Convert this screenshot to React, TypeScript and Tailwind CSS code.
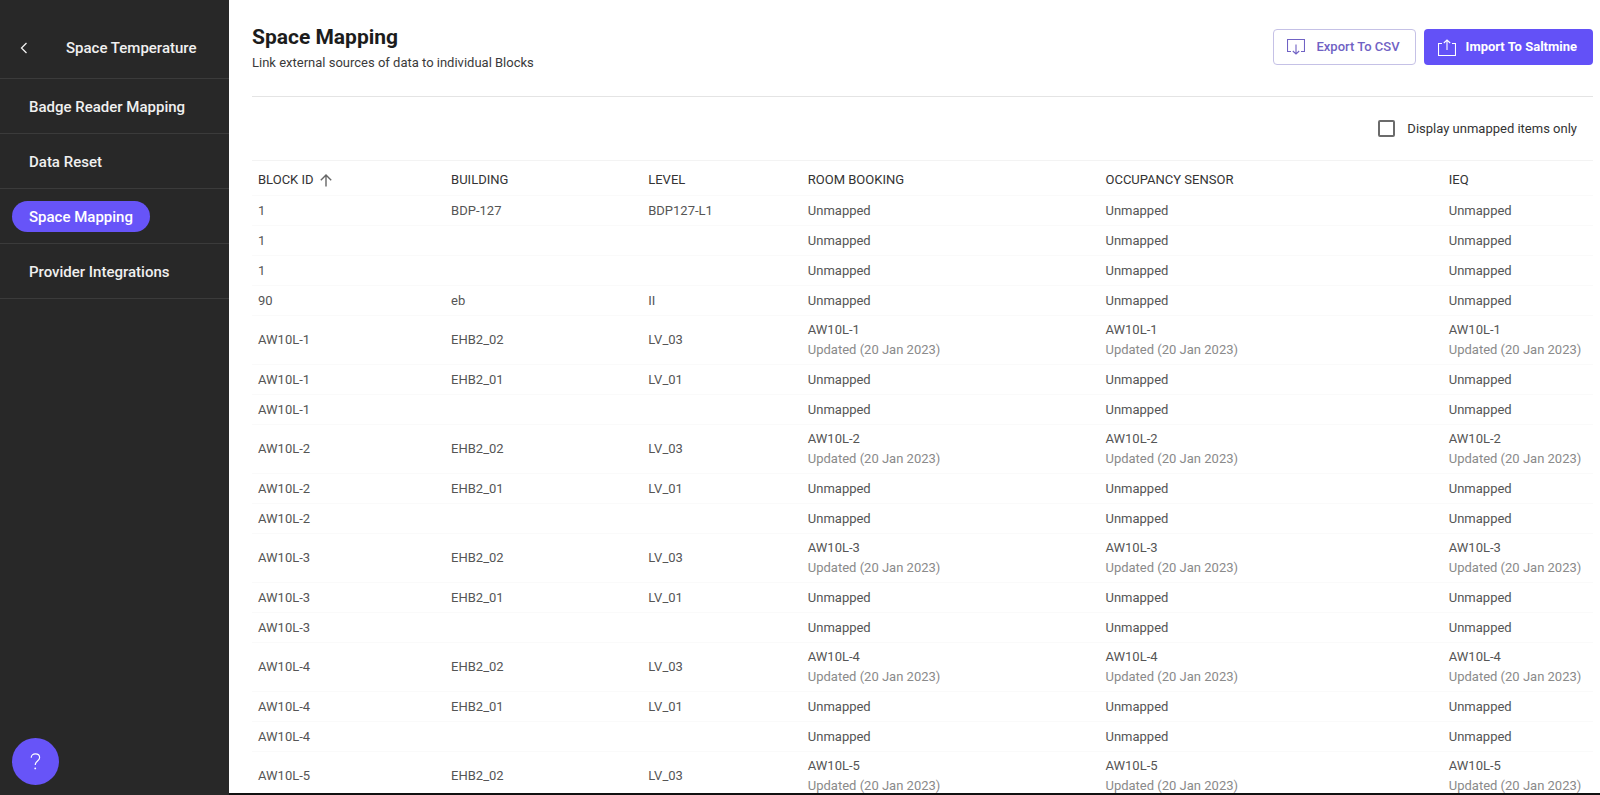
import { useState } from 'react';

type Mapping = { name: string; updated: string } | null;

type Row = {
  id: string;
  building: string;
  level: string;
  mapping: Mapping;
};

const navItems = ['Badge Reader Mapping', 'Data Reset', 'Space Mapping', 'Provider Integrations'];

const columns = [
  { label: 'BLOCK ID', width: 'w-[14.4%]', sorted: true },
  { label: 'BUILDING', width: 'w-[14.7%]' },
  { label: 'LEVEL', width: 'w-[11.9%]' },
  { label: 'ROOM BOOKING', width: 'w-[22.2%]' },
  { label: 'OCCUPANCY SENSOR', width: 'w-[25.6%]' },
  { label: 'IEQ', width: 'w-[11.2%]' },
];

// Each AW10L block shows up three times: mapped on level 3, unmapped on level 1 and unassigned
const blockRows = (id: string): Row[] => [
  { id, building: 'EHB2_02', level: 'LV_03', mapping: { name: id, updated: '20 Jan 2023' } },
  { id, building: 'EHB2_01', level: 'LV_01', mapping: null },
  { id, building: '', level: '', mapping: null },
];

const rows: Row[] = [
  { id: '1', building: 'BDP-127', level: 'BDP127-L1', mapping: null },
  { id: '1', building: '', level: '', mapping: null },
  { id: '1', building: '', level: '', mapping: null },
  { id: '90', building: 'eb', level: 'II', mapping: null },
  ...['AW10L-1', 'AW10L-2', 'AW10L-3', 'AW10L-4'].flatMap(blockRows),
  { id: 'AW10L-5', building: 'EHB2_02', level: 'LV_03', mapping: { name: 'AW10L-5', updated: '20 Jan 2023' } },
];

function ExportIcon() {
  return (
    <svg width="18" height="16" viewBox="0 0 18 16" fill="none" stroke="currentColor" strokeWidth="1.1" aria-hidden="true">
      <path d="M4 12.5H.5V.5h17v12H14" />
      <path d="M9 5.5v9.5M5.8 12 9 15l3.2-3" />
    </svg>
  );
}

function ImportIcon() {
  return (
    <svg width="18" height="17" viewBox="0 0 18 17" fill="none" stroke="currentColor" strokeWidth="1.1" aria-hidden="true">
      <path d="M4 4.5H.5v12h17v-12H14" />
      <path d="M9 11V1M5.8 4 9 1l3.2 3" />
    </svg>
  );
}

function MappingCell({ mapping }: { mapping: Mapping }) {
  if (!mapping) return <>Unmapped</>;
  return (
    <>
      <div>{mapping.name}</div>
      <div className="text-[#8a8a8a]">Updated ({mapping.updated})</div>
    </>
  );
}

export default function App() {
  const [active, setActive] = useState('Space Mapping');
  const [unmappedOnly, setUnmappedOnly] = useState(false);

  const visibleRows = unmappedOnly ? rows.filter((row) => !row.mapping) : rows;

  return (
    <div className="flex h-screen bg-white font-[Roboto,sans-serif] text-[#222]">
      {/* Sidebar */}
      <aside className="flex w-[229px] shrink-0 flex-col bg-[#282828] text-[15px] font-medium text-[#f0f0f0]">
        <div className="flex h-[79px] items-center border-b border-[#3b3b3b] pt-[18px] pl-5">
          <button aria-label="Back" className="flex w-[46px]">
            <svg width="8" height="12" viewBox="0 0 8 12" fill="none" stroke="currentColor" strokeWidth="1.3">
              <path d="M6.5 1 1.5 6l5 5" />
            </svg>
          </button>
          <span>Space Temperature</span>
        </div>
        <nav>
          {navItems.map((item) => (
            <div key={item} className="flex h-[55px] items-center border-b border-[#3b3b3b] pl-3">
              <button
                onClick={() => setActive(item)}
                className={`h-[31px] rounded-full px-[17px] pt-0.5 ${active === item ? 'bg-[#6754f8] text-white' : ''}`}
              >
                {item}
              </button>
            </div>
          ))}
        </nav>
        <button
          aria-label="Help"
          className="mt-auto mb-[10px] ml-3 flex size-[47px] items-center justify-center rounded-full bg-[#6754f8]"
        >
          <svg width="11" height="17" viewBox="0 0 12 19" fill="none" stroke="white" strokeWidth="1.3">
            <path d="M1.2 5.2C1.2 2.6 3.2 1 5.9 1s4.7 1.6 4.7 4.1c0 3.8-4.9 3.9-4.9 8.2" />
            <circle cx="5.7" cy="17.2" r="1" fill="white" stroke="none" />
          </svg>
        </button>
      </aside>

      {/* Content */}
      <main className="flex min-w-0 flex-1 flex-col overflow-hidden border-b-2 border-[#111] pr-[7px] pl-[23px]">
        <header className="flex h-[97px] shrink-0 items-start justify-between border-b border-[#e4e4e4] pt-6">
          <div>
            <h1 className="text-[21px] leading-[26px] font-bold text-[#1c1c1c]">Space Mapping</h1>
            <p className="mt-0.5 text-[13px] leading-[22px] text-[#3a3a3a]">Link external sources of data to individual Blocks</p>
          </div>
          <div className="flex gap-2 pt-[5px] text-[13px]">
            <button className="flex h-9 items-center gap-[11px] rounded border border-[#c5c1e6] pr-[15px] pl-[13px] font-medium text-[#7062c4]">
              <ExportIcon />
              Export To CSV
            </button>
            <button className="flex h-9 items-center gap-[10px] rounded bg-[#6351f7] pr-4 pl-[14px] font-bold text-white">
              <ImportIcon />
              Import To Saltmine
            </button>
          </div>
        </header>

        <div className="flex h-[63px] shrink-0 items-center justify-end pr-4">
          <label className="flex items-center gap-3 text-[13px] text-[#333]">
            <input
              type="checkbox"
              checked={unmappedOnly}
              onChange={(e) => setUnmappedOnly(e.target.checked)}
              className="size-[17px] appearance-none rounded-xs border-2 border-[#6b6b6b] checked:bg-[#6754f8]"
            />
            Display unmapped items only
          </label>
        </div>

        <table className="w-full table-fixed border-t border-[#f3f3f3] text-[13px] leading-5 text-[#555]">
          <thead>
            <tr className="h-[35px] border-b border-[#fafafa] text-left text-[#333]">
              {columns.map(({ label, width, sorted }) => (
                <th key={label} className={`px-1.5 py-0 font-normal whitespace-nowrap ${width}`}>
                  <span className="flex items-center gap-1.5 pt-1">
                    {label}
                    {sorted && (
                      <svg width="12" height="13" viewBox="0 0 12 13" fill="none" stroke="#666" strokeWidth="1.4">
                        <path d="M6 12.5V1M.8 6.2 6 1l5.2 5.2" />
                      </svg>
                    )}
                  </span>
                </th>
              ))}
            </tr>
          </thead>
          <tbody>
            {visibleRows.map((row, i) => (
              <tr key={i} className="h-[30px] border-b border-[#fafafa]">
                <td className="px-1.5 py-1">{row.id}</td>
                <td className="px-1.5 py-1">{row.building}</td>
                <td className="px-1.5 py-1">{row.level}</td>
                <td className="px-1.5 py-1 whitespace-nowrap"><MappingCell mapping={row.mapping} /></td>
                <td className="px-1.5 py-1 whitespace-nowrap"><MappingCell mapping={row.mapping} /></td>
                <td className="px-1.5 py-1 whitespace-nowrap"><MappingCell mapping={row.mapping} /></td>
              </tr>
            ))}
          </tbody>
        </table>
      </main>
    </div>
  );
}
